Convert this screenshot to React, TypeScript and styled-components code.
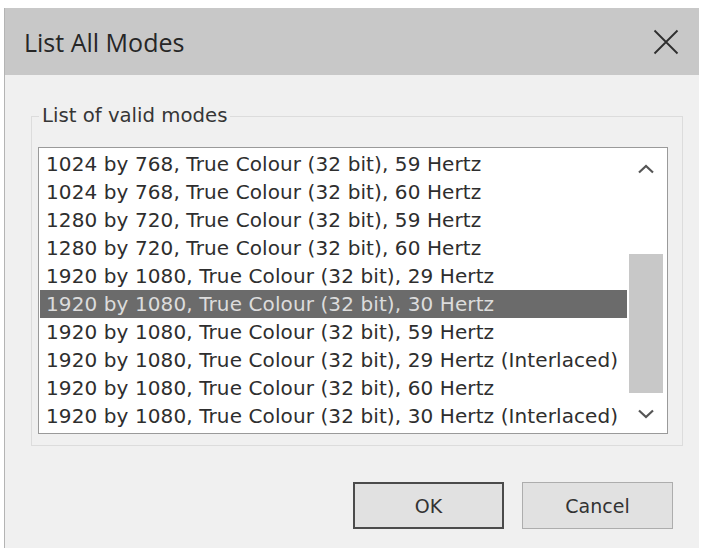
import React from "react";
import styled, { createGlobalStyle } from "styled-components";

const Global = createGlobalStyle`
  html, body { margin: 0; padding: 0; background: #ffffff; }
  body { width: 701px; height: 548px; overflow: hidden; }
`;

const Page = styled.div`
  padding: 8px 2px 0 4px;
  height: 548px;
  box-sizing: border-box;
`;

const Dialog = styled.div`
  display: flex;
  flex-direction: column;
  height: 100%;
  background: #f0f0f0;
  border-left: 1px solid #b4b4b4;
  box-sizing: border-box;
`;

const TitleBar = styled.div`
  height: 67px;
  flex: none;
  display: flex;
  align-items: center;
  justify-content: space-between;
  background: #c8c8c8;
  padding: 0 19px 0 19px;
  box-sizing: border-box;
`;

const Title = styled.div`
  font-family: "Open Sans", "Noto Sans", sans-serif;
  font-size: 25px;
  color: #262626;
  margin-top: 1px;
`;

const CloseButton = styled.div`
  width: 28px;
  height: 28px;
  display: flex;
  align-items: center;
  justify-content: center;
  margin-top: 1px;
`;

const Body = styled.div`
  flex: 1;
  display: flex;
  flex-direction: column;
  padding: 29px 16px 0 26px;
`;

const Group = styled.fieldset`
  margin: 0;
  padding: 0 14px 11px 6px;
  border: 1px solid #dcdcdc;
  min-width: 0;
`;

const Legend = styled.legend`
  margin-left: 1px;
  padding: 0 3px;
  font-family: "DejaVu Sans", "Verdana", sans-serif;
  font-size: 19.7px;
  line-height: 24px;
  color: #363636;
`;

const ListBox = styled.div`
  margin-top: 19px;
  height: 287px;
  display: flex;
  border: 1px solid #9a9a9a;
  background: #ffffff;
  box-sizing: border-box;
`;

const Items = styled.div`
  flex: 1;
  padding: 2px 1px 0 1px;
`;

const Item = styled.div<{ $selected?: boolean }>`
  height: 28px;
  line-height: 28px;
  padding-left: 6px;
  font-family: "DejaVu Sans", "Verdana", sans-serif;
  font-size: 20px;
  letter-spacing: 0.1px;
  white-space: nowrap;
  overflow: hidden;
  color: ${(p) => (p.$selected ? "#dcdcdc" : "#2e2e2e")};
  background: ${(p) => (p.$selected ? "#6b6b6b" : "transparent")};
`;

const ScrollBar = styled.div`
  width: 39px;
  flex: none;
  display: flex;
  flex-direction: column;
  background: #ffffff;
`;

const ArrowButton = styled.div<{ $h: number }>`
  height: ${(p) => p.$h}px;
  display: flex;
  align-items: center;
  justify-content: center;
  padding-right: 3px;
`;

const Track = styled.div`
  flex: 1;
  display: flex;
  flex-direction: column;
  padding: 0 4px 0 1px;
`;

const Thumb = styled.div`
  background: #c8c8c8;
`;

const Buttons = styled.div`
  display: flex;
  justify-content: flex-end;
  gap: 18px;
  margin-top: 36px;
  padding-right: 10px;
`;

const Button = styled.div<{ $default?: boolean }>`
  width: 151px;
  height: 47px;
  box-sizing: border-box;
  display: flex;
  align-items: center;
  justify-content: center;
  background: #e1e1e1;
  border: ${(p) => (p.$default ? "2px solid #4b4b4b" : "1px solid #adadad")};
  font-family: "DejaVu Sans", "Verdana", sans-serif;
  font-size: 19px;
  color: #333333;
`;

const modes = [
  "1024 by 768, True Colour (32 bit), 59 Hertz",
  "1024 by 768, True Colour (32 bit), 60 Hertz",
  "1280 by 720, True Colour (32 bit), 59 Hertz",
  "1280 by 720, True Colour (32 bit), 60 Hertz",
  "1920 by 1080, True Colour (32 bit), 29 Hertz",
  "1920 by 1080, True Colour (32 bit), 30 Hertz",
  "1920 by 1080, True Colour (32 bit), 59 Hertz",
  "1920 by 1080, True Colour (32 bit), 29 Hertz (Interlaced)",
  "1920 by 1080, True Colour (32 bit), 60 Hertz",
  "1920 by 1080, True Colour (32 bit), 30 Hertz (Interlaced)",
];

const Chevron = ({ up }: { up?: boolean }) => (
  <svg width="18" height="10" viewBox="0 0 18 10">
    <path
      d={up ? "M2 8.5 L9 2 L16 8.5" : "M2 1.5 L9 8 L16 1.5"}
      fill="none"
      stroke="#555"
      strokeWidth="2.2"
    />
  </svg>
);

export default function App() {
  return (
    <>
      <Global />
      <Page>
        <Dialog>
          <TitleBar>
            <Title>List All Modes</Title>
            <CloseButton>
              <svg width="26" height="26" viewBox="0 0 26 26">
                <path d="M1.5 1.5 L24.5 24.5 M24.5 1.5 L1.5 24.5" stroke="#2e2e2e" strokeWidth="1.8" fill="none" />
              </svg>
            </CloseButton>
          </TitleBar>
          <Body>
            <Group>
              <Legend>List of valid modes</Legend>
              <ListBox>
                <Items>
                  {modes.map((m, i) => (
                    <Item key={i} $selected={i === 5}>
                      {m}
                    </Item>
                  ))}
                </Items>
                <ScrollBar>
                  <ArrowButton $h={42}>
                    <Chevron up />
                  </ArrowButton>
                  <Track>
                    <Thumb style={{ marginTop: 64, height: 139 }} />
                  </Track>
                  <ArrowButton $h={38}>
                    <Chevron />
                  </ArrowButton>
                </ScrollBar>
              </ListBox>
            </Group>
            <Buttons>
              <Button $default>OK</Button>
              <Button>Cancel</Button>
            </Buttons>
          </Body>
        </Dialog>
      </Page>
    </>
  );
}
